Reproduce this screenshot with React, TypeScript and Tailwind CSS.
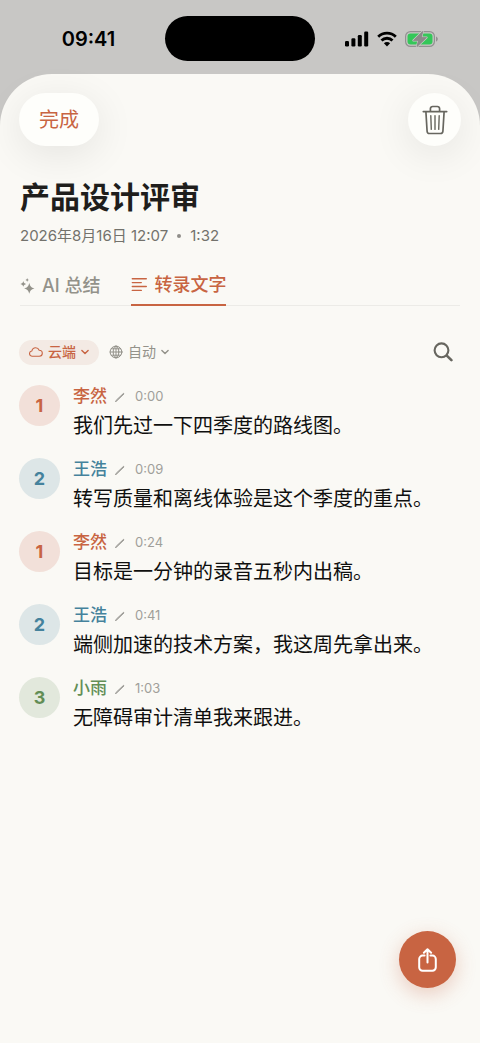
import { clsx } from "clsx";
import type { ReactNode } from "react";

interface Speaker {
    name: string;
    badge: string;
    badgeClass: string;
    nameClass: string;
}

const speakers: Record<string, Speaker> = {
    li: { name: "李然", badge: "1", badgeClass: "bg-[#f2e0d9] text-[#c86442]", nameClass: "text-[#c86442]" },
    wang: { name: "王浩", badge: "2", badgeClass: "bg-[#dde6e7] text-[#45829c]", nameClass: "text-[#45829c]" },
    xiao: { name: "小雨", badge: "3", badgeClass: "bg-[#e2e8dc] text-[#628e55]", nameClass: "text-[#628e55]" },
};

const segments = [
    { speaker: "li", time: "0:00", text: "我们先过一下四季度的路线图。" },
    { speaker: "wang", time: "0:09", text: "转写质量和离线体验是这个季度的重点。" },
    { speaker: "li", time: "0:24", text: "目标是一分钟的录音五秒内出稿。" },
    { speaker: "wang", time: "0:41", text: "端侧加速的技术方案，我这周先拿出来。" },
    { speaker: "xiao", time: "1:03", text: "无障碍审计清单我来跟进。" },
];

function Icon({ className, viewBox, width = 1.5, children }: { className: string; viewBox: string; width?: number; children: ReactNode }) {
    return (
        <svg
            aria-hidden="true"
            className={clsx("shrink-0", className)}
            viewBox={viewBox}
            fill="none"
            stroke="currentColor"
            strokeWidth={width}
            strokeLinecap="round"
            strokeLinejoin="round"
        >
            {children}
        </svg>
    );
}

function Chevron() {
    return (
        <Icon className="w-2 h-2" viewBox="0 0 8 8" width={1.4}>
            <path d="M.9 2.4 4 5.6l3.1-3.2" />
        </Icon>
    );
}

function StatusBar() {
    return (
        <div className="flex h-[74px] items-start justify-between pt-4">
            <div className="flex-1 pl-3 text-center text-xl leading-[46px] font-semibold text-black">09:41</div>
            <div className="h-[45px] w-[150px] rounded-full bg-black" />
            <div className="flex h-[46px] flex-1 items-center justify-center gap-2 pr-3 text-black">
                <svg aria-hidden="true" className="h-4 w-6" viewBox="0 0 24 16" fill="currentColor">
                    <rect x="0" y="10" width="4" height="5.5" rx="1.2" />
                    <rect x="6.4" y="7.2" width="4" height="8.3" rx="1.2" />
                    <rect x="12.8" y="4" width="4" height="11.5" rx="1.2" />
                    <rect x="19.2" y=".6" width="4" height="14.9" rx="1.2" />
                </svg>
                <svg aria-hidden="true" className="h-4 w-5" viewBox="0 0 20 16" fill="none" stroke="currentColor" strokeWidth="2.8">
                    <path d="M1.2 5.8a12.6 12.6 0 0 1 17.6 0" />
                    <path d="M4.5 9.5a7.8 7.8 0 0 1 11 0" />
                    <path d="M10 15.4 6.9 12.3a4.4 4.4 0 0 1 6.2 0Z" fill="currentColor" stroke="none" />
                </svg>
                <svg aria-hidden="true" className="h-4 w-[33px]" viewBox="0 0 33 16">
                    <rect x=".6" y=".6" width="28.8" height="14.8" rx="4.8" fill="none" stroke="#929191" strokeWidth="1.2" />
                    <rect x="2.5" y="2.5" width="25" height="11" rx="3" fill="#34c759" />
                    <path d="M31 5.4v5.2c1.1-.5 1.8-1.5 1.8-2.6s-.7-2.1-1.8-2.6Z" fill="#929191" />
                    <path
                        d="M17.8.3 8.4 9.5h5L11.9 15.7l9.7-9.2h-5.2Z"
                        fill="#8b8a89"
                        stroke="#c8c7c5"
                        strokeWidth="2"
                        strokeLinejoin="round"
                        paintOrder="stroke"
                    />
                    <path d="M17.8.3 8.4 9.5h5L11.9 15.7l9.7-9.2h-5.2Z" fill="#8b8a89" stroke="#8b8a89" strokeWidth=".6" strokeLinejoin="round" />
                </svg>
            </div>
        </div>
    );
}

function SegmentRow({ speaker, time, text }: (typeof segments)[number]) {
    const { name, badge, badgeClass, nameClass } = speakers[speaker];

    return (
        <li className="flex h-[73px] items-start gap-[13px]">
            <div className={clsx("flex h-[41px] w-[41px] shrink-0 items-center justify-center rounded-full text-lg font-bold", badgeClass)}>
                {badge}
            </div>
            <div className="min-w-0">
                <div className="flex h-6 items-center">
                    <span className={clsx("text-[17px] font-medium", nameClass)}>{name}</span>
                    <button type="button" aria-label="编辑说话人" className="ml-2 text-[#8f8e89]">
                        <Icon className="w-2.5 h-2.5" viewBox="0 0 10 10" width={1}>
                            <path d="m.7 9.3.5-1L8.6 1.3l.4.5L1.8 8.8Z" />
                        </Icon>
                    </button>
                    <span className="ml-[10px] text-[13px] text-[#a09f9a]">{time}</span>
                </div>
                <p className="mt-[3px] text-xl leading-7 text-[#0f0f0e]">{text}</p>
            </div>
        </li>
    );
}

export default function App() {
    return (
        <div className="relative flex min-h-screen flex-col bg-[#c8c7c5] font-[Inter,'Noto_Sans_CJK_SC',sans-serif]">
            <StatusBar />

            <main className="flex-1 rounded-t-[52px] bg-[#faf9f5] px-5 pt-[19px]">
                <div className="-mx-px flex items-center justify-between">
                    <button
                        type="button"
                        className="h-[53px] rounded-full bg-[#fefefb] px-5 pt-px text-xl text-[#c86442] shadow-[0_8px_40px_rgba(0,0,0,0.09)]"
                    >
                        完成
                    </button>
                    <button
                        type="button"
                        aria-label="删除"
                        className="flex h-[53px] w-[53px] items-center justify-center rounded-full bg-[#fefefb] text-[#67665f] shadow-[0_8px_40px_rgba(0,0,0,0.09)]"
                    >
                        <Icon className="w-[26px] h-[30px]" viewBox="0 0 26 30" width={1.7}>
                            <path d="M1.3 6.6h23.4M3.9 6.8l1.2 19.4a2.4 2.4 0 0 0 2.4 2.3h11a2.4 2.4 0 0 0 2.4-2.3l1.2-19.4M8.4 6.4V3.7a2.2 2.2 0 0 1 2.2-2.2h4.8a2.2 2.2 0 0 1 2.2 2.2v2.7" />
                            <path d="m8.8 10.6.5 13.8M13 10.6v13.8M17.2 10.6l-.5 13.8" strokeWidth="1.4" />
                        </Icon>
                    </button>
                </div>

                <h1 className="mt-[31px] text-[30px] leading-10 font-bold text-[#1f1e1c]">产品设计评审</h1>
                <p className="mt-[9px] flex items-center gap-[9px] text-[15px] leading-5 text-[#73726c]">
                    <span>2026年8月16日 12:07</span>
                    <span className="h-1 w-1 rounded-full bg-[#8f8e89]" />
                    <span>1:32</span>
                </p>

                <nav role="tablist" className="mt-5 flex h-10 gap-[31px] border-b border-[#ecebe7]">
                    <button type="button" role="tab" aria-selected="false" className="flex items-center gap-[6px] text-lg font-medium text-[#93928a]">
                        <svg aria-hidden="true" className="h-4 w-4" viewBox="0 0 16 16" fill="currentColor">
                            <path d="M9.3 5c.8 3.2 1.8 4.5 5.2 5.4-3.4.9-4.4 2.2-5.2 5.4-.8-3.2-1.8-4.5-5.2-5.4C7.500 9.500 8.500 8.200 9.300 5Z" />
                            <path d="M3.300 3c.5 1.800 1 2.400 2.900 2.900-1.900.5-2.400 1.100-2.900 2.900C2.800 7 2.300 6.400.400 5.900 2.300 5.400 2.800 4.800 3.300 3ZM7.200 0c.3 1.200.7 1.600 1.900 1.900-1.200.3-1.600.7-1.900 1.900-.3-1.200-.7-1.600-1.900-1.900C6.500 1.600 6.900 1.200 7.200 0Z" />
                        </svg>
                        AI 总结
                    </button>
                    <button type="button" role="tab" aria-selected="true" className="-mb-px flex items-center gap-[7px] border-b-2 border-[#c86442] text-lg font-medium text-[#c86442]">
                        <Icon className="w-4 h-4" viewBox="0 0 16 16" width={1.4}>
                            <path d="M1.300 1.700h14M1.300 5.600h9M1.300 9.500h14M1.300 13.400h9" />
                        </Icon>
                        转录文字
                    </button>
                </nav>

                <div className="mt-8 -mx-px flex h-7 items-center">
                    <button type="button" className="flex h-[25px] items-center gap-[5px] rounded-full bg-[#f3eae4] px-[10px] text-sm font-medium text-[#c86442]">
                        <Icon className="w-[14px] h-[10px]" viewBox="0 0 14 10" width={1.1}>
                            <path d="M3.4 9.2a2.6 2.6 0 0 1-.5-5.2C3.3 2 4.8.8 6.6.8c1.7 0 3 .9 3.6 2.4 1.8 0 3.1 1.3 3.1 3s-1.3 3-3 3Z" />
                        </Icon>
                        云端
                        <Chevron />
                    </button>
                    <button type="button" className="ml-[10px] flex h-[25px] items-center gap-[5px] text-sm text-[#93928a]">
                        <Icon className="w-[14px] h-[14px]" viewBox="0 0 14 14" width={1}>
                            <circle cx="7" cy="7" r="5.9" />
                            <ellipse cx="7" cy="7" rx="2.8" ry="5.9" />
                            <path d="M7 1.1v11.8M1.1 7h11.8M2.3 3.8h9.4M2.3 10.2h9.4" />
                        </Icon>
                        自动
                        <Chevron />
                    </button>
                    <button type="button" aria-label="搜索" className="mr-2 ml-auto text-[#67665f]">
                        <Icon className="w-5 h-5" viewBox="0 0 20 20" width={2.1}>
                            <circle cx="8.5" cy="8.3" r="6.9" />
                            <path d="m13.8 13.6 4.6 4.6" strokeWidth="2.6" />
                        </Icon>
                    </button>
                </div>

                <ul className="-mx-px mt-[19px] pb-24">
                    {segments.map((segment) => (
                        <SegmentRow key={segment.time} {...segment} />
                    ))}
                </ul>
            </main>

            <button
                type="button"
                aria-label="分享"
                className="absolute right-6 bottom-[55px] flex h-[57px] w-[57px] items-center justify-center rounded-full bg-[#c86442] text-white shadow-[0_6px_20px_rgba(200,100,66,0.3)]"
            >
                <Icon className="w-5 h-6" viewBox="0 0 20 24" width={2}>
                    <path d="M6.600 7.600H4.600a3.400 3.400 0 0 0-3.400 3.400v8.300a3.400 3.400 0 0 0 3.400 3.400h9.800a3.400 3.400 0 0 0 3.400-3.400V11a3.400 3.400 0 0 0-3.400-3.400h-2" />
                    <path d="M9.500 14.500V1.300M5.900 4.800 9.500 1.200l3.600 3.600" />
                </Icon>
            </button>
        </div>
    );
}
